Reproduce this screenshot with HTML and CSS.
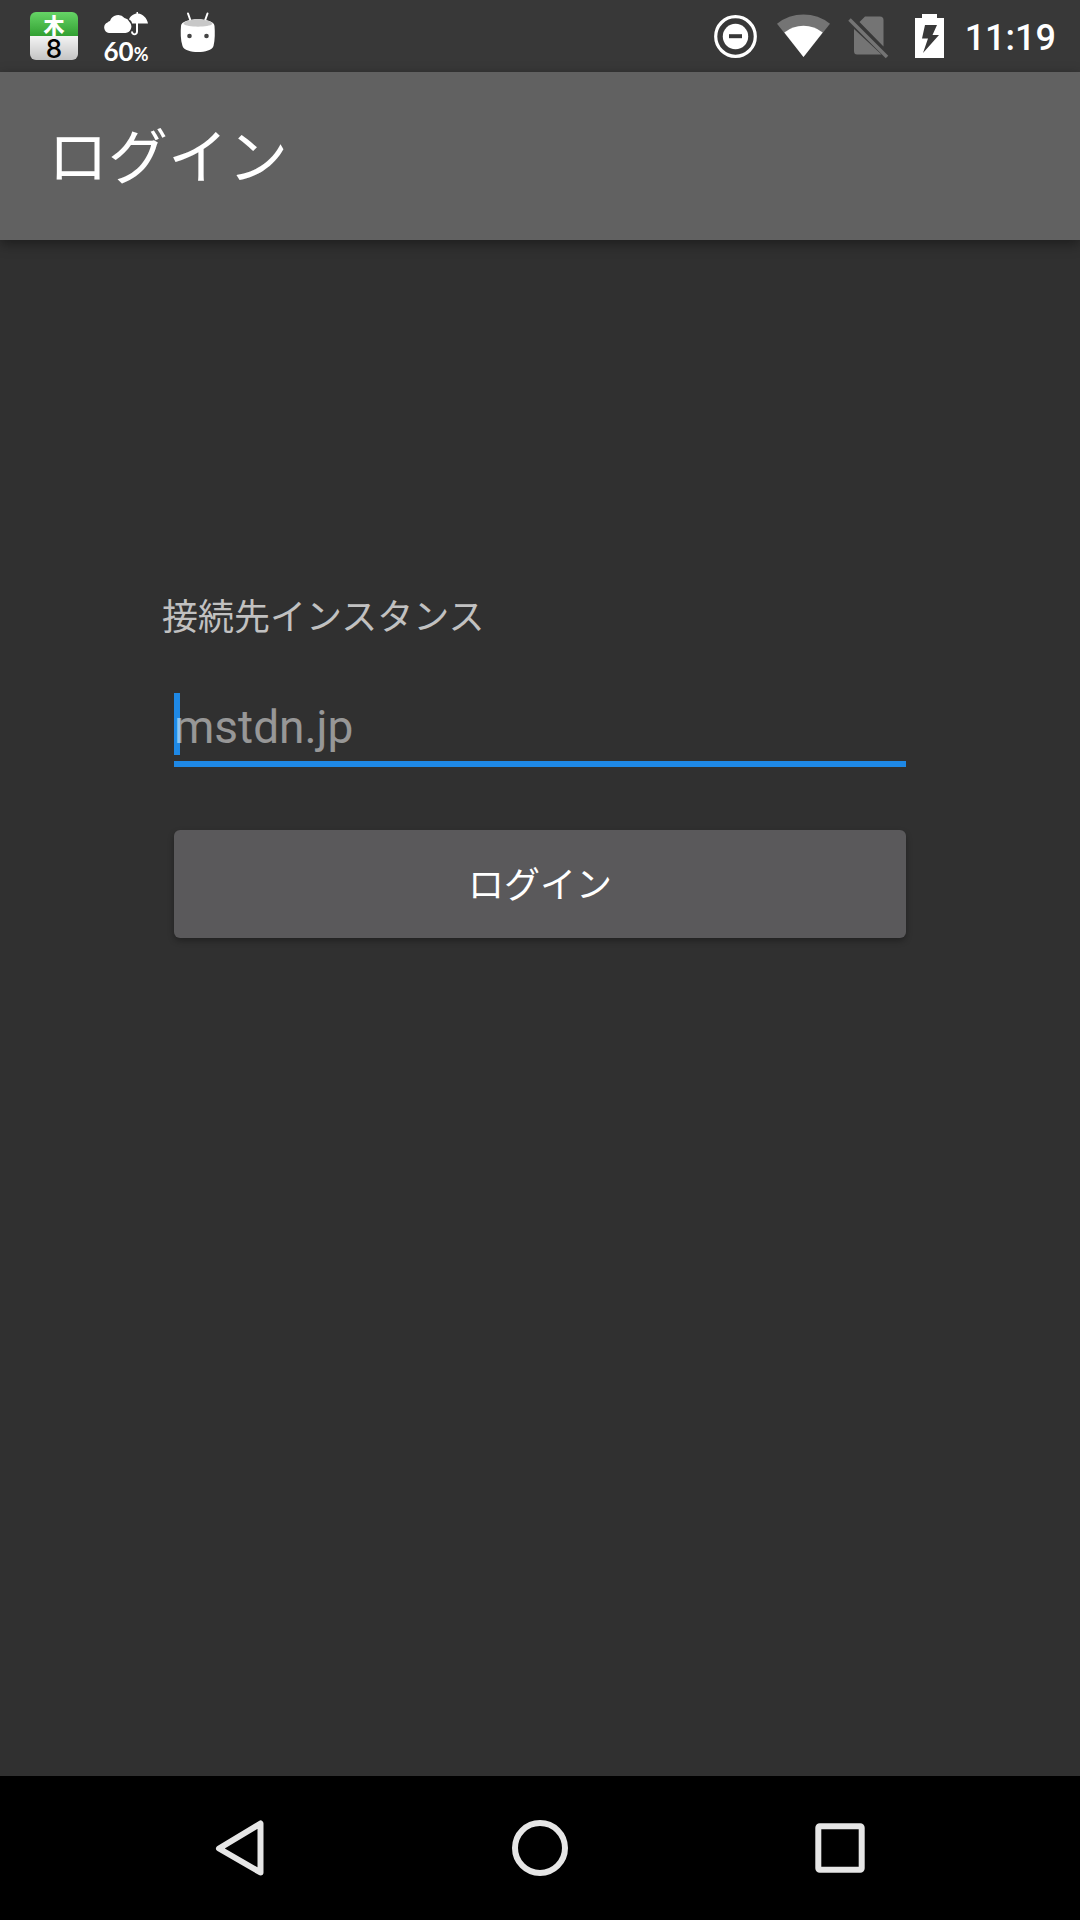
FILE: index.html
```html
<!DOCTYPE html>
<html lang="ja">
<head>
<meta charset="utf-8">
<meta name="viewport" content="width=device-width, initial-scale=1">
<title>ログイン</title>
<link rel="stylesheet" href="styles.css">
</head>
<body>
<div class="screen">
  <div class="status-bar">
    <div class="notifications">
      <div class="notice">
        <div class="calendar">
          <span class="calendar-weekday">木</span>
          <span class="calendar-day">8</span>
        </div>
      </div>
      <div class="notice weather">
        <svg class="weather-icon" viewBox="0 0 44 24" fill="#fff" aria-hidden="true">
          <path d="M5 21A5.500 5.500 0 0 1 3.500 10.500A5 5 0 0 1 6 9A8.500 8.500 0 0 1 20.500 6A7 7 0 0 1 25.500 10A6.500 6.500 0 0 1 21.500 21Z"/>
          <path d="M25 7.500C26 4 29.500 2 32.500 1.500V0H34V1.500C39 2 43 6 44 11.500H34V19.500C34 24.500 27 24.500 27 19.500H29C29 22 32 22 32 19.500V11.500H28C28 9.500 26.500 8 25 7.500Z"/>
        </svg>
        <span class="weather-rain">60<span class="weather-unit">%</span></span>
      </div>
      <div class="notice">
        <svg class="robot-icon" viewBox="0 0 36 48" aria-hidden="true">
          <path d="M8 1.500L11 10M27.500 1.500L24.500 10" stroke="#fff" stroke-width="2" stroke-linecap="round"/>
          <path d="M1 14C1 5 34.500 5 34.500 14C35 20 35 28 33.500 34C31 42 5 42 2.500 34C.500 28 .500 20 1 14Z" fill="#fff"/>
          <path d="M3.500 12C4 6 32 6 32.500 12C29 15.500 7 15.500 3.500 12Z" fill="#c8c8c8"/>
          <circle cx="9.500" cy="24" r="2.300" fill="#444"/><circle cx="26.500" cy="24" r="2.300" fill="#444"/>
        </svg>
      </div>
    </div>
    <div class="system">
      <svg class="dnd-icon" viewBox="0 0 50 48" aria-hidden="true">
        <circle cx="24.500" cy="24.500" r="19.800" fill="none" stroke="#fff" stroke-width="3.200"/>
        <circle cx="24.500" cy="24.500" r="12.700" fill="#fff"/>
        <path d="M18 22.200H31V26.200H18Z" fill="#383838"/>
      </svg>
      <svg class="wifi-icon" viewBox="0 0 60 48" aria-hidden="true">
        <path d="M4 11.800A42 42 0 0 1 57 11.800L30.500 45Z" fill="#747474"/>
        <path d="M11.300 20.500A31 31 0 0 1 49.700 20.500L30.500 45Z" fill="#fff"/>
      </svg>
      <svg class="sim-icon" viewBox="0 0 58 48" aria-hidden="true">
        <path d="M14.500 10L20 4.500H35Q38.500 4.500 38.500 8V34.500ZM9 17L36.500 42.500H12Q9 42.500 9 39Z" fill="#747474"/>
        <path d="M4.500 7.500L42 45" stroke="#747474" stroke-width="3.500"/>
      </svg>
      <svg class="battery-icon" viewBox="0 0 30 48" aria-hidden="true">
        <path d="M0 6H7V2H22V6H29V46H0Z" fill="#fff"/>
        <path d="M10 13H22L17.500 23H24L8 41L13 26.500H7Z" fill="#383838"/>
      </svg>
      <time class="clock" datetime="11:19">11:19</time>
    </div>
  </div>

  <header class="app-bar">
    <h1 class="app-title">ログイン</h1>
  </header>

  <main class="content">
    <form class="login-form">
      <label class="field-label" for="instance">接続先インスタンス</label>
      <div class="field">
        <span class="caret"></span>
        <input class="field-input" id="instance" type="text" placeholder="mstdn.jp">
      </div>
      <button class="login-button" type="submit">ログイン</button>
    </form>
  </main>

  <nav class="nav-bar">
    <button class="nav-button" type="button" aria-label="戻る">
      <svg class="nav-icon" viewBox="0 0 60 60"><path d="M9 30.500L50.500 5.500V54.500Z" fill="none" stroke="#e6e6e6" stroke-width="6" stroke-linejoin="round"/></svg>
    </button>
    <button class="nav-button" type="button" aria-label="ホーム">
      <svg class="nav-icon" viewBox="0 0 60 60"><circle cx="30" cy="30" r="25" fill="none" stroke="#e6e6e6" stroke-width="6"/></svg>
    </button>
    <button class="nav-button" type="button" aria-label="最近使ったアプリ">
      <svg class="nav-icon" viewBox="0 0 60 60"><rect x="8.300" y="8.300" width="43.400" height="43.400" rx="1.500" fill="none" stroke="#e6e6e6" stroke-width="6"/></svg>
    </button>
  </nav>
</div>
</body>
</html>
```
FILE: styles.css
```css
* {
  box-sizing: border-box;
}

body {
  margin: 0;
  background: #303030;
  color: #fff;
  font-family: Roboto, "Noto Sans CJK JP", sans-serif;
}

svg {
  display: block;
}

.screen {
  display: flex;
  flex-direction: column;
  min-height: 100vh;
}

/* Status bar */
.status-bar {
  display: flex;
  justify-content: space-between;
  align-items: center;
  height: 72px;
  padding: 0 24px;
  background: #383838;
}

.notifications,
.system {
  display: flex;
  align-items: center;
  gap: 12px;
}

.notice {
  display: flex;
  justify-content: center;
  width: 60px;
}

.calendar {
  display: grid;
  grid-template-rows: 24px 24px;
  width: 48px;
  height: 48px;
  border-radius: 6px;
  background: linear-gradient(#66d466, #32a032 24px, #f4f4f4 24px, #c4c4c4);
  text-align: center;
}

.calendar-weekday {
  font: 900 21px/24px "Noto Sans CJK JP", sans-serif;
}

.calendar-day {
  color: #000;
  font: 500 26px/26px Inter, sans-serif;
}

.weather {
  flex-direction: column;
  align-items: center;
}

.weather-icon {
  width: 44px;
  height: 24px;
}

.weather-rain {
  height: 24px;
  font: 700 26px/30px Lato, sans-serif;
}

.weather-unit {
  font-size: 18px;
}

.robot-icon {
  width: 36px;
  height: 48px;
}

.dnd-icon {
  width: 50px;
  height: 48px;
}

.wifi-icon {
  width: 60px;
  height: 48px;
}

.sim-icon {
  width: 58px;
  height: 48px;
}

.battery-icon {
  width: 30px;
  height: 48px;
}

.clock {
  margin-left: 8px;
  padding-top: 4px;
  font-size: 36px;
  font-weight: 500;
  line-height: 48px;
}

/* App bar */
.app-bar {
  display: flex;
  align-items: center;
  height: 168px;
  padding: 6px 48px 0;
  background: #616161;
  box-shadow: 0 4px 12px rgba(0, 0, 0, 0.4);
}

.app-title {
  margin: 0;
  font-size: 60px;
  font-weight: 400;
  line-height: 72px;
}

/* Login form */
.content {
  flex: 1;
  padding: 351px 15% 0;
}

.login-form {
  display: flex;
  flex-direction: column;
}

.field-label {
  color: #c1c1c1;
  font-size: 36px;
  line-height: 54px;
}

.field {
  position: relative;
  margin: 48px 12px 0;
  border-bottom: 6px solid #1e88e5;
}

.caret {
  position: absolute;
  top: 0;
  left: 0;
  width: 6px;
  height: 62px;
  background: #1e88e5;
}

.field-input {
  position: relative;
  display: block;
  width: 100%;
  height: 68px;
  padding: 0;
  border: 0;
  outline: 0;
  background: transparent;
  color: #fff;
  caret-color: transparent;
  font: 400 46px/68px Roboto, "Noto Sans CJK JP", sans-serif;
}

.field-input::placeholder {
  color: rgba(255, 255, 255, 0.5);
  opacity: 1;
}

.login-button {
  height: 108px;
  margin: 63px 12px 0;
  padding: 4px 0 0;
  border: 0;
  border-radius: 6px;
  background: #5a595b;
  box-shadow: 0 3px 6px rgba(0, 0, 0, 0.3);
  color: #fff;
  font: 400 36px/54px Roboto, "Noto Sans CJK JP", sans-serif;
}

/* Navigation bar */
.nav-bar {
  display: grid;
  grid-template-columns: repeat(3, 1fr);
  height: 144px;
  padding: 0 90px;
  background: #000;
}

.nav-button {
  display: flex;
  align-items: center;
  justify-content: center;
  padding: 0;
  border: 0;
  background: transparent;
}

.nav-icon {
  width: 60px;
  height: 60px;
}
```
